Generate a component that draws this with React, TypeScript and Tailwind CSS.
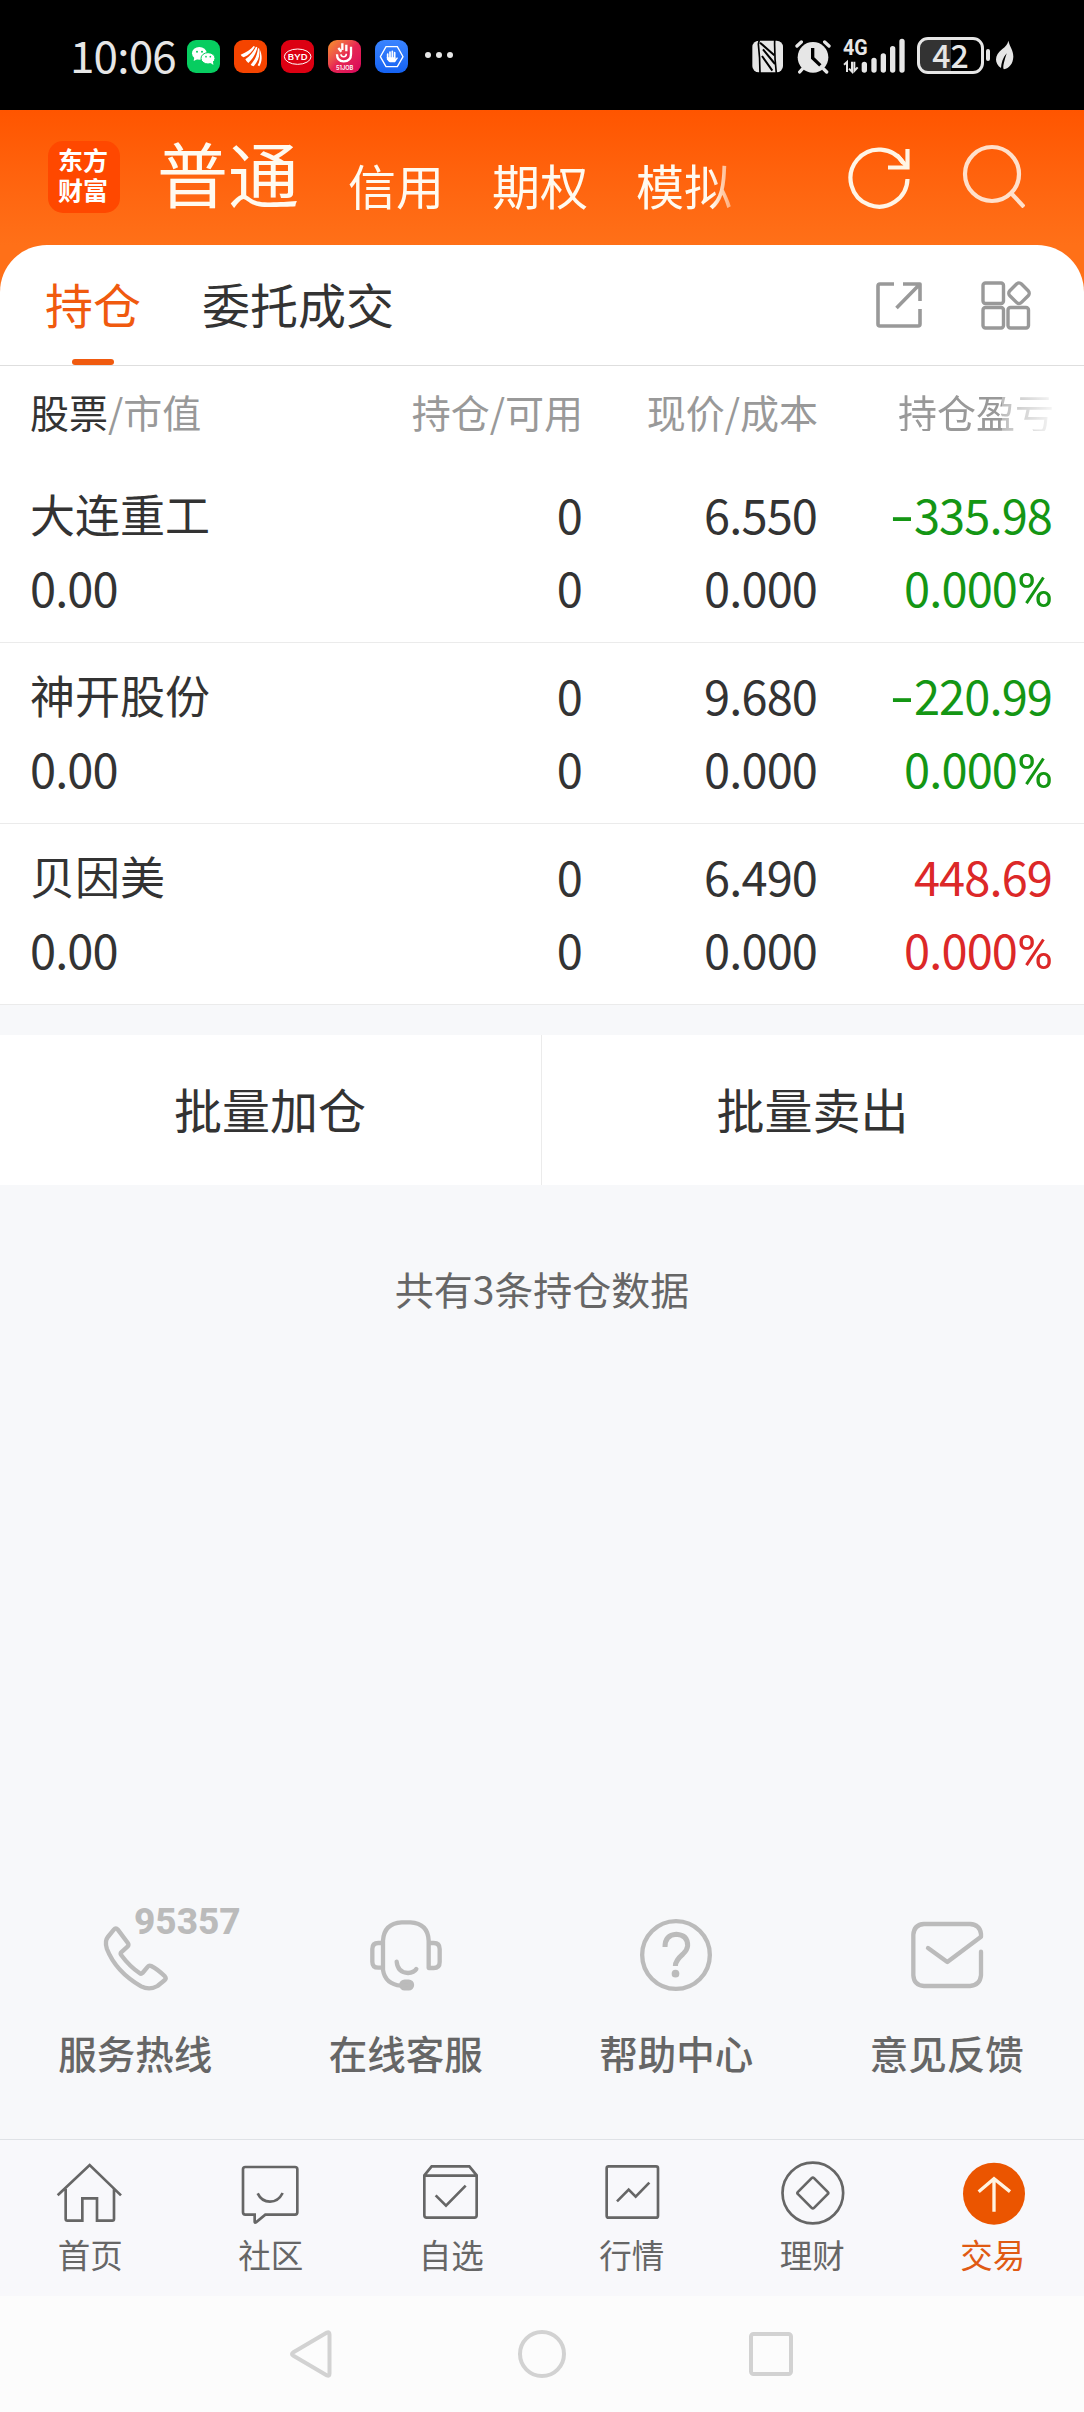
import type { ReactNode } from "react"

const holdings = [
  { name: "大连重工", value: "0.00", amount: "0", usable: "0", price: "6.550", cost: "0.000", profit: "-335.98", rate: "0.000", up: false },
  { name: "神开股份", value: "0.00", amount: "0", usable: "0", price: "9.680", cost: "0.000", profit: "-220.99", rate: "0.000", up: false },
  { name: "贝因美", value: "0.00", amount: "0", usable: "0", price: "6.490", cost: "0.000", profit: "448.69", rate: "0.000", up: true },
]

/* ─── Status bar ─── */

function AppBadge({ className, children }: { className: string; children: ReactNode }) {
  return (
    <div className={`w-[33px] h-[33px] rounded-[9px] overflow-hidden ${className}`}>
      <svg viewBox="0 0 99 99" className="w-full h-full">{children}</svg>
    </div>
  )
}

function StatusBar() {
  return (
    <div className="h-[110px] shrink-0 bg-black flex items-center text-[#e6e6e6]">
      <div className="w-[117px] ml-[70px] text-[44px] leading-[44px] tracking-[-0.8px] pb-0.5">10:06</div>
      <div className="flex items-center gap-[14px] mt-[3px]">
        <AppBadge className="bg-[#07cd60]">
          <ellipse cx="37" cy="40" rx="22" ry="19" fill="#fff" />
          <path d="M22 52l-2 11 12-6z" fill="#fff" />
          <ellipse cx="63" cy="55" rx="21" ry="17" fill="#fff" stroke="#07cd60" strokeWidth="3" />
          <path d="M70 68l9 7-1-11z" fill="#fff" />
          <g fill="#07cd60">
            <circle cx="30" cy="35" r="3" />
            <circle cx="45" cy="35" r="3" />
            <circle cx="57" cy="50" r="2.5" />
            <circle cx="70" cy="50" r="2.5" />
          </g>
        </AppBadge>
        <AppBadge className="bg-[#f54400]">
          <g fill="#fff">
            <path d="M20 44C38 37 50 28 59 18l4 2C56 34 44 46 29 52q-7-3-9-8z" />
            <path d="M34 58C48 48 58 36 66 20l4 2C66 42 56 56 43 69q-6-4-9-11z" />
            <path d="M50 74c12-13 20-28 22-50l4 2c3 22-4 38-17 53q-6-1-9-5z" />
            <path d="M71 76c6-10 8-26 7-46 7 17 7 34-2 49z" />
          </g>
        </AppBadge>
        <AppBadge className="bg-[#dc0012]">
          <ellipse cx="50" cy="50" rx="40" ry="23" fill="none" stroke="#fff" strokeWidth="3" />
          <text x="50" y="59" textAnchor="middle" textLength="60" lengthAdjust="spacingAndGlyphs" fontFamily="Inter" fontSize="24" fontWeight="600" fill="#fff">BYD</text>
        </AppBadge>
        <AppBadge className="bg-linear-to-br from-[#f7901e] via-[#e62552] to-[#d8005c]">
          <path d="M43 10v20M55 14v20M31 24l9 11M27 43c0 16 9 21 20 21 14 0 22-8 22-22V20" fill="none" stroke="#fff" strokeWidth="7" />
          <path d="M39 43c0 10 16 10 16-2" fill="none" stroke="#fff" strokeWidth="5" />
          <text x="50" y="91" textAnchor="middle" textLength="52" lengthAdjust="spacingAndGlyphs" fontFamily="Inter" fontSize="18" fontWeight="600" fill="#fff">51JOB</text>
        </AppBadge>
        <AppBadge className="bg-linear-to-b from-[#3a84ff] to-[#1462f2]">
          <path d="M33 20h34l17 30-17 30H33L16 50z" fill="none" stroke="#fff" strokeWidth="4" />
          <path d="M38 42v16M45 36v22M52 34v24M59 38v24" stroke="#fff" strokeWidth="5" strokeLinecap="round" />
          <path d="M35 52h26v6l5-6 3 2-9 13H45q-7-2-10-15z" fill="#fff" />
        </AppBadge>
        <div className="flex gap-[5px] ml-[3px] -mt-[3px]">
          <i className="w-1.5 h-1.5 rounded-full bg-[#e6e6e6]" />
          <i className="w-1.5 h-1.5 rounded-full bg-[#e6e6e6]" />
          <i className="w-1.5 h-1.5 rounded-full bg-[#e6e6e6]" />
        </div>
      </div>

      <div className="flex items-center ml-auto mr-[69px]">
        <svg viewBox="66 51 462 111" className="w-[154px] h-[37px] mr-[11px]" fill="#e6e6e6">
          {/* nfc */}
          <rect x="67" y="62" width="92" height="95" rx="19" />
          <path d="M88 60l-3 12q5 40 5 88M134 60q-1 50 5 100" fill="none" stroke="#000" strokeWidth="5" />
          <path d="M90 68l43 38M99 88l36 44M96 108l31 44" fill="none" stroke="#000" strokeWidth="6" />
          {/* alarm */}
          <circle cx="249" cy="112" r="46" />
          <path d="M201 78l13-12M297 78l-13-12M217 147l-8 9M281 147l9 9" stroke="#e6e6e6" strokeWidth="10" strokeLinecap="round" />
          <path d="M248 84v30l23 22" fill="none" stroke="#000" strokeWidth="10" />
          {/* signal */}
          <text x="339" y="106" textLength="74" lengthAdjust="spacingAndGlyphs" fontFamily="Roboto" fontSize="66" fontWeight="700">4G</text>
          <path d="M342 134l9-8v30M366 125v30l-9-9M373 125v28l10-11" fill="none" stroke="#e6e6e6" strokeWidth="6" />
          <path d="M403 133v17M432 121v29M460 108v42M488 86v64M516 64v86" stroke="#e6e6e6" strokeWidth="16" strokeLinecap="round" />
        </svg>
        <div className="w-[67px] h-[37px] rounded-[11px] border-[3px] border-[#e6e6e6] bg-linear-to-r from-[#333] from-50% to-black to-50% text-[32px] leading-[28px] font-medium text-center">
          42
        </div>
        <div className="w-1 h-3 ml-[2px] rounded-full bg-[#e6e6e6]" />
        <svg viewBox="796 60 60 90" className="w-5 h-[30px] ml-[5px]">
          <path d="M836 62c5 20 15 28 15 48-1 22-13 34-28 38-6-3 2-28 8-48-12 14-16 30-17 44-22-16-19-40 4-57 10-8 16-14 18-25z" fill="#e6e6e6" />
        </svg>
      </div>
    </div>
  )
}

/* ─── Orange header ─── */

function Header() {
  return (
    <div className="h-[135px] shrink-0 flex items-start pl-12 text-[#fffaf0]">
      <div className="w-[72px] h-[72px] mt-[31px] rounded-[15px] bg-[#ff4800] text-white text-[25px] leading-[30px] font-bold pl-[10px] pt-[3px]">
        东方
        <br />
        财富
      </div>
      <div className="w-[585px] h-[135px] ml-[37px] flex items-start whitespace-nowrap mask-[linear-gradient(to_right,black_555px,transparent_590px)]">
        <span className="mt-[26px] text-[71px] leading-[71px]">普通</span>
        <span className="mt-[50px] ml-[49px] text-[48px] leading-[48px]">信用</span>
        <span className="mt-[50px] ml-[48px] text-[48px] leading-[48px]">期权</span>
        <span className="mt-[50px] ml-[48px] text-[48px] leading-[48px]">模拟</span>
      </div>
      <svg viewBox="0 0 64 64" className="w-16 h-16 mt-[36px] ml-[105px]" fill="none" stroke="#fff5e6" strokeWidth="4.2">
        <path d="M60.500 33A28.500 28.500 0 1 1 56.300 17.200" />
        <path d="M60.500 3v18.500H41" />
        <path d="M60 21L50 9" />
      </svg>
      <svg viewBox="0 0 64 64" className="w-16 h-16 mt-[34px] ml-[50px]" fill="none" stroke="#ffe0cb" strokeWidth="4.2">
        <circle cx="31" cy="30" r="27" />
        <path d="M50 49l13 14" />
      </svg>
    </div>
  )
}

function Tabs() {
  return (
    <div className="h-[121px] shrink-0 flex items-center pb-[5px] pl-[45px] pr-[52px] border-b border-[#dedede] text-[48px] leading-[48px]">
      <div className="relative text-[#f05a0f]">
        持仓
        <div className="absolute left-[27px] top-[80px] w-[42px] h-1.5 rounded-full bg-[#f05a0f]" />
      </div>
      <div className="ml-[61px] text-[#333]">委托成交</div>
      <svg viewBox="0 0 46 46" className="w-[46px] h-[46px] mt-1 ml-auto" fill="none" stroke="#999" strokeWidth="3.6" strokeLinejoin="round">
        <path d="M18 2H4q-2 0-2 2v38q0 2 2 2h38q2 0 2-2V27" />
        <path d="M27 2h17v17M43 3L20.500 26" />
      </svg>
      <svg viewBox="0 0 50 50" className="w-[50px] h-[50px] mt-[5px] ml-[59px] mr-px" fill="none" stroke="#999" strokeWidth="3.4">
        <rect x="2" y="3" width="20.500" height="20.500" rx="2.500" />
        <rect x="2" y="27.500" width="20.500" height="20.500" rx="2.500" />
        <rect x="27" y="27.500" width="20.500" height="20.500" rx="2.500" />
        <rect x="29.700" y="5" width="16.500" height="16.500" rx="3.500" transform="rotate(45 38 13.300)" />
      </svg>
    </div>
  )
}

/* ─── Positions ─── */

function Profit({ value }: { value: string }) {
  if (!value.startsWith("-")) return <>{value}</>
  return (
    <>
      <span className="inline-block font-[Inter] scale-x-120 mr-0.5">-</span>
      {value.slice(1)}
    </>
  )
}

function HoldingsTable() {
  return (
    <div className="bg-white">
      <div className="h-24 grid grid-cols-[318px_235px_235px_236px] items-center pl-[30px] pb-[6px] text-right text-[39px] leading-[40px] text-[#999]">
        <div className="text-left">
          <span className="text-[#333]">股票</span>/市值
        </div>
        <div>持仓/可用</div>
        <div>现价/成本</div>
        <div className="mask-[linear-gradient(to_right,black_184px,rgba(0,0,0,0.65)_184px,rgba(0,0,0,0.08)_236px)]">持仓盈亏</div>
      </div>
      {holdings.map((h) => (
        <div
          key={h.name}
          className="h-[181px] pt-[15px] grid grid-cols-[318px_234px_235px_235px] auto-rows-[73px] pl-[30px] border-b border-[#ebebeb] text-right text-[47px] leading-[73px] tracking-[-0.9px] text-[#333]"
        >
          <div className="text-left text-[45px] tracking-normal">{h.name}</div>
          <div>{h.amount}</div>
          <div>{h.price}</div>
          <div className={h.up ? "text-[#dc2828]" : "text-[#149614]"}>
            <Profit value={h.profit} />
          </div>
          <div className="text-left">{h.value}</div>
          <div>{h.usable}</div>
          <div>{h.cost}</div>
          <div className={h.up ? "text-[#dc2828]" : "text-[#149614]"}>
            {h.rate}
            <span className="font-[Roboto] text-[49px]">%</span>
          </div>
        </div>
      ))}
    </div>
  )
}

/* ─── Service shortcuts ─── */

const services = [
  {
    label: "服务热线",
    badge: "95357",
    viewBox: "166.500 45 300 288",
    icon: (
      <path d="M253 119q6-7 12 0l30 40q4 6-1 11l-19 17q-3 4 0 8 24 33 56 55 4 3 8-1l16-19q4-5 10-2 20 10 41 31 5 6 0 11l-22 18q-24 14-49 1-76-44-103-113-7-23 3-35z" />
    ),
  },
  {
    label: "在线客服",
    viewBox: "978 45 300 288",
    icon: (
      <>
        <path d="M1059 159h-14q-18 0-18 18v38q0 18 18 18h14M1059 240v-88q3-52 56-55h26q53 3 55 55v82h15q18 0 18-18v-39q0-18-18-18h-15M1059 240q7 43 54 47" />
        <path d="M1100 215q3 33 34 34 18-1 25-12" />
        <rect x="1114" y="275" width="32" height="20" rx="10" fill="#bbb" />
      </>
    ),
  },
  {
    label: "帮助中心",
    viewBox: "201 45 300 288",
    icon: (
      <>
        <circle cx="351" cy="195" r="101.500" />
        <path d="M318 171q0-36 34-38 34 2 34 34-1 13-14 25-23 20-23 36" strokeLinecap="butt" strokeWidth="15" />
        <circle cx="349.500" cy="251" r="11.500" fill="#bbb" stroke="none" />
      </>
    ),
  },
  {
    label: "意见反馈",
    viewBox: "1014 45 300 288",
    icon: (
      <path d="M1107 174l58 42 101-76v-8q-3-28-33-30h-138q-30 2-32 32v122q2 30 32 32h138q30-2 33-32v-71" />
    ),
  },
]

function Services() {
  return (
    <div className="grid grid-cols-4 pr-[2px] pb-[67px]">
      {services.map((s) => (
        <div key={s.label} className="relative flex flex-col items-center">
          <svg viewBox={s.viewBox} className="w-[100px] h-24" fill="none" stroke="#bbb" strokeWidth="13" strokeLinecap="round" strokeLinejoin="round">
            {s.icon}
          </svg>
          {s.badge && (
            <span className="absolute left-[134px] -top-[3px] font-[Roboto] font-extrabold text-[37px] leading-[40px] text-[#bbb]">{s.badge}</span>
          )}
          <span className="mt-[31px] text-[38.500px] leading-[40px] font-medium text-[#666]">{s.label}</span>
        </div>
      ))}
    </div>
  )
}

/* ─── Bottom navigation ─── */

const navItems = [
  {
    label: "首页",
    viewBox: "75 85 210 210",
    icon: <path d="M83 197l96-91 94 91M107 178v90q0 5 5 5h45v-67h44v67h46q5 0 5-5v-90" />,
  },
  {
    label: "社区",
    viewBox: "616 85 210 210",
    icon: (
      <>
        <path d="M644 112h149q7 0 7 7v129q0 7-7 7h-89l-28 23q-4 2-4-2v-21h-28q-7 0-7-7V119q0-7 7-7z" />
        <path d="M681 191q12 25 37 25t38-26" />
      </>
    ),
  },
  {
    label: "自选",
    viewBox: "1157 85 210 210",
    icon: (
      <>
        <path d="M1182 137l22-27h113l22 27v120q0 7-7 7h-143q-7 0-7-7zM1184 138h153" />
        <path d="M1216 197l31 31 59-60" />
      </>
    ),
  },
  {
    label: "行情",
    viewBox: "108 85 210 210",
    icon: (
      <>
        <rect x="137" y="110" width="154" height="154" rx="6" />
        <path d="M168 215l35-35 21 21 41-42" />
      </>
    ),
  },
  {
    label: "理财",
    viewBox: "650 85 210 210",
    icon: (
      <>
        <circle cx="757.500" cy="190" r="91" />
        <rect x="723.500" y="156" width="68" height="68" rx="5" transform="rotate(45 757.500 190)" />
      </>
    ),
  },
  {
    label: "交易",
    viewBox: "1194 85 210 210",
    active: true,
    icon: (
      <>
        <circle cx="1302" cy="192" r="93" fill="#eb5500" stroke="none" />
        <path d="M1302 246V148M1256 186l46-39 48 39" stroke="#fff3e0" strokeWidth="10" />
      </>
    ),
  },
]

function BottomNav() {
  return (
    <div className="h-[157px] shrink-0 grid grid-cols-6 pt-[18px] pr-px border-t border-[#dfe2e6] bg-[#f8f8fb]">
      {navItems.map((n) => (
        <div key={n.label} className="flex flex-col items-center">
          <svg viewBox={n.viewBox} className="w-[70px] h-[70px]" fill="none" stroke="#666" strokeWidth="8">
            {n.icon}
          </svg>
          <span className={`mt-[9px] text-[32.500px] leading-[34px] ${n.active ? "text-[#e05a14]" : "text-[#666]"}`}>{n.label}</span>
        </div>
      ))}
    </div>
  )
}

function SystemBar() {
  return (
    <div className="h-[116px] shrink-0 flex items-center justify-between pl-[286px] pr-[288px] bg-[#fcfcfc]">
      <svg viewBox="0 0 50 50" className="w-[50px] h-[50px]" fill="none" stroke="#d2d2d2" strokeWidth="4" strokeLinejoin="round">
        <path d="M41 3.500q2.500-1 2.500 2v39q0 3-2.500 2L7 26.500q-2-1.500 0-3z" />
      </svg>
      <svg viewBox="0 0 50 50" className="w-[50px] h-[50px]" fill="none" stroke="#d2d2d2" strokeWidth="4">
        <circle cx="26" cy="25" r="22" />
      </svg>
      <svg viewBox="0 0 50 50" className="w-[50px] h-[50px]" fill="none" stroke="#d2d2d2" strokeWidth="4">
        <rect x="5" y="5" width="40" height="40" rx="2.500" />
      </svg>
    </div>
  )
}

export default function App() {
  return (
    <div className="w-[1084px] h-[2412px] flex flex-col overflow-hidden bg-[#f7f8fa] font-['Noto_Sans_CJK_SC',sans-serif]">
      <StatusBar />
      <div className="bg-linear-to-b from-[#ff5500] to-[#ff7018] to-[135px]">
        <Header />
        <div className="rounded-t-[47px] bg-white">
          <Tabs />
          <HoldingsTable />
        </div>
      </div>
      <div className="grid grid-cols-2 h-[150px] shrink-0 mt-[30px] bg-white text-[48px] leading-[48px] text-[#333]">
        <button className="pb-[5px] pr-px border-r border-[#ebebeb]">批量加仓</button>
        <button className="pb-[5px] pr-px">批量卖出</button>
      </div>
      <p className="mt-[83px] text-center text-[39px] leading-[40px] text-[#666]">共有3条持仓数据</p>
      <div className="flex-1" />
      <Services />
      <BottomNav />
      <SystemBar />
    </div>
  )
}
